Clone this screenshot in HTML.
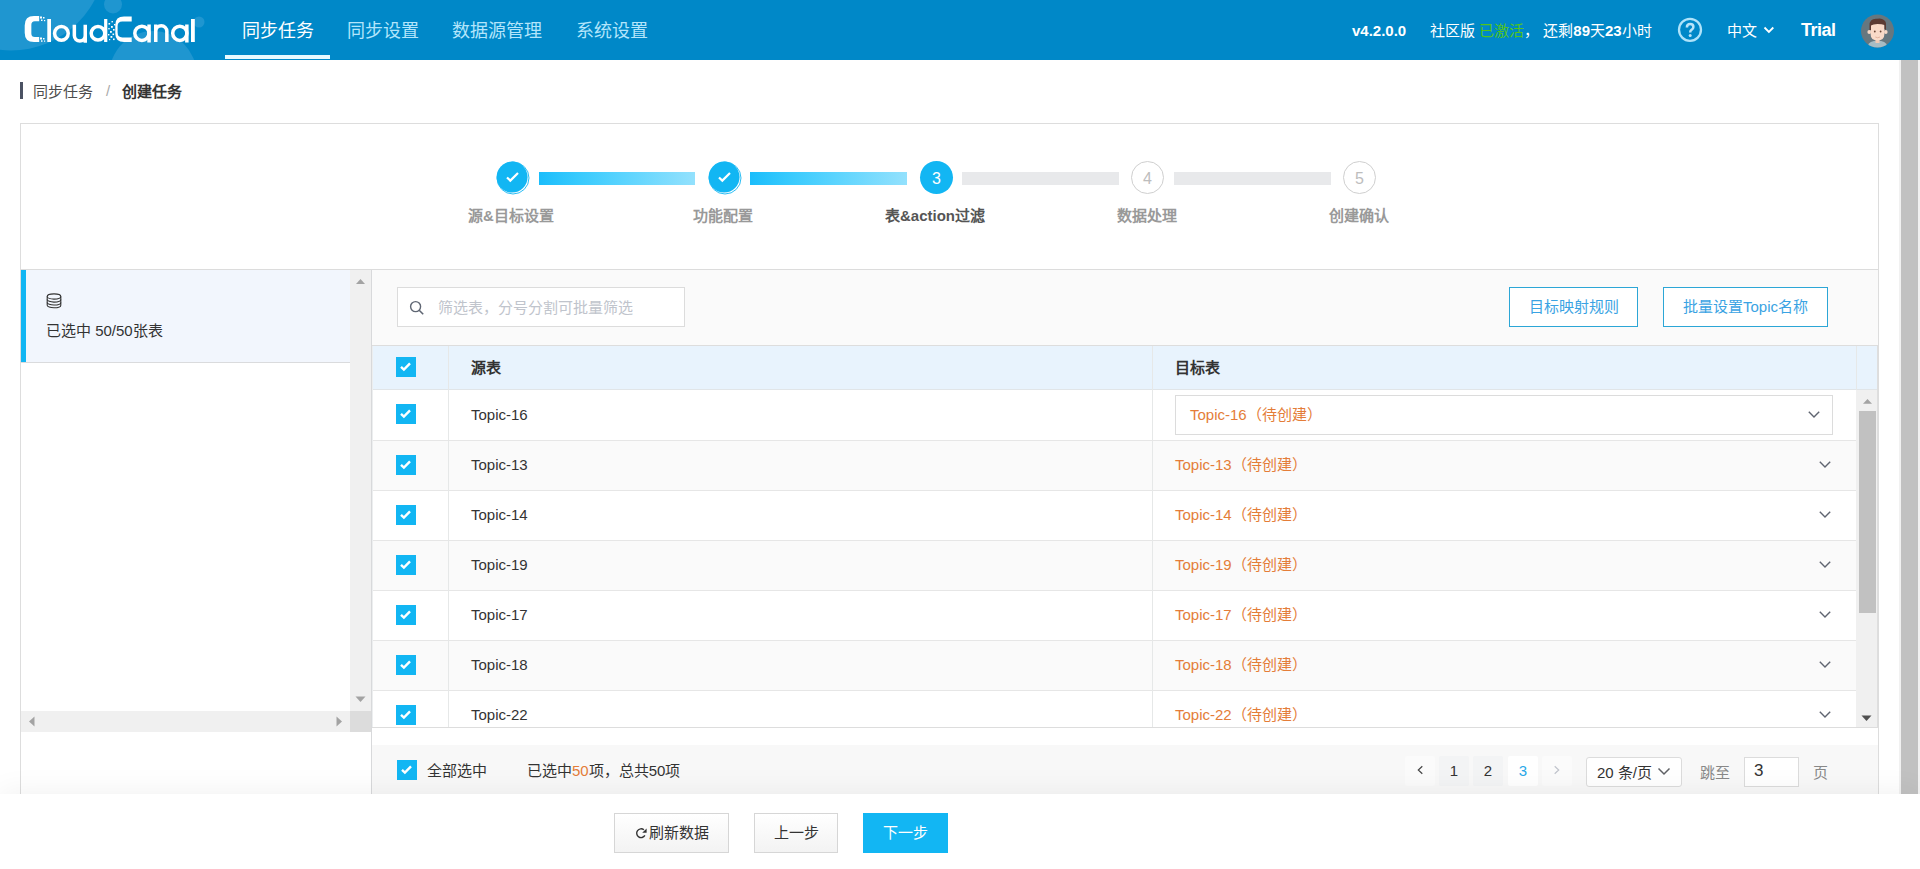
<!DOCTYPE html>
<html lang="zh-CN"><head><meta charset="utf-8">
<style>
*{box-sizing:border-box;margin:0;padding:0}
html,body{width:1920px;height:869px;overflow:hidden;background:#fff;font-family:"Liberation Sans",sans-serif;color:#333;font-size:15px}
.abs{position:absolute}
#hdr{position:absolute;left:0;top:0;width:1920px;height:60px;background:#0088c8;overflow:hidden}
.nav{position:absolute;top:1px;height:60px;line-height:60px;font-size:18px;color:#b3e5fb;white-space:nowrap}
.nav.act{color:#fff}
.uline{position:absolute;left:225px;top:55px;width:105px;height:4px;background:#e8faff}
.htxt{position:absolute;top:1px;height:60px;line-height:60px;color:#fff;font-size:15px;white-space:nowrap}
#pscroll{position:absolute;left:1899px;top:60px;width:21px;height:734px;background:#f1f1f1}
#pscroll .th{position:absolute;left:2px;top:0;width:17px;height:734px;background:#c1c1c1}
.bc-bar{position:absolute;left:20px;top:82px;width:3px;height:17px;background:#4b5263}
.card{position:absolute;left:20px;top:123px;width:1859px;height:700px;border:1px solid #ddd;background:#fff}
.step-c{position:absolute;top:161px;width:33px;height:33px;border-radius:50%;text-align:center;line-height:35px;font-size:16px}
.step-c.done{background:#12b6f3;box-shadow:inset 0 0 0 1px #12b6f3, inset 0 0 0 2px #e6f7ff}
.step-c.cur{background:#12b6f3;color:#fff}
.step-c.todo{border:1px solid #cfcfcf;color:#bdbdbd;line-height:33px}
.step-l{position:absolute;top:172px;height:13px}
.step-l.on{background:linear-gradient(90deg,#1bbdfb 0%,#38cafd 25%,#5cd4fe 55%,#93e1fd 100%)}
.step-l.off{background:#e8e9eb}
.step-t{position:absolute;top:204px;width:212px;text-align:center;font-size:15px;font-weight:bold;color:#999;white-space:nowrap}
.step-t.cur{color:#555}

.sep{position:absolute;left:21px;top:269px;width:1857px;height:1px;background:#dcdcdc}
#lp{position:absolute;left:21px;top:270px;width:350px;height:524px;background:#fff}
.litem{position:absolute;left:0;top:0;width:329px;height:93px;background:#f2f6fd;border-bottom:1px solid #dadbdd}
.litem .acc{position:absolute;left:0;top:0;width:5px;height:92px;background:#12b6f3}
.vsb{position:absolute;left:329px;top:0;width:21px;height:441px;background:#f0f0f0}
.hsb{position:absolute;left:0;top:441px;width:329px;height:21px;background:#f0f0f0}
.corner{position:absolute;left:329px;top:441px;width:21px;height:21px;background:#dcdcdc}
.vline{position:absolute;left:371px;top:270px;width:1px;height:524px;background:#d8d9db}
#rp{position:absolute;left:372px;top:270px;width:1506px;height:524px;background:#fafafa}
.inp{position:absolute;background:#fff;border:1px solid #dcdcdc}
.obtn{position:absolute;top:17px;height:40px;border:1px solid #2ca6d6;background:#fff;color:#3aa3e3;text-align:center;line-height:38px;font-size:15px;white-space:nowrap}
.tbl{position:absolute;left:0;top:75px;width:1506px;height:383px;background:#fff;border-top:1px solid #dddddd;border-bottom:1px solid #dddddd;border-right:1px solid #dedede;overflow:hidden}
.thd{position:absolute;left:0;top:0;width:1506px;height:44px;background:#e8f3fd;border-bottom:1px solid #e1e5e8}
.row{position:absolute;left:0;width:1484px;height:50px;border-bottom:1px solid #e6e6e6;background:#fff}
.row.alt{background:#fafafa}
.cb{position:absolute;left:24px;width:20px;height:20px;background:#12b6f3}
.cb svg{position:absolute;left:0;top:0}
.cdiv{position:absolute;top:0;width:1px;background:#e6e8e8}
.rtx{position:absolute;left:99px;top:0;line-height:48px;font-size:15px;color:#333;white-space:nowrap}
.otx{position:absolute;left:803px;top:0;line-height:48px;font-size:15px;color:#e47d38;white-space:nowrap}
.chev{position:absolute;left:1446px;top:14px}
.tvsb{position:absolute;left:1484px;top:44px;width:21px;height:338px;background:#f0f0f0}
.pftr{position:absolute;left:0;top:475px;width:1506px;height:49px;background:#f8f8f8}
.pg{position:absolute;top:486px;width:30px;height:30px;line-height:30px;text-align:center;font-size:15px;color:#333;background:#f3f4f5;border-radius:2px}
#ftr{position:absolute;left:0;top:794px;width:1920px;height:75px;background:#fff;box-shadow:0 -2px 30px rgba(0,0,0,0.06)}
.fbtn{position:absolute;top:19px;height:40px;border:1px solid #d6d6d6;background:linear-gradient(#fff,#f3f3f3);text-align:center;line-height:38px;font-size:15px;color:#333;white-space:nowrap}
</style></head><body>

<div id="hdr">
  <svg class="abs" style="left:0;top:0" width="260" height="60">
    <circle cx="11" cy="-44" r="94.5" fill="#1f96d0"/>
    <circle cx="113" cy="4.5" r="9" fill="#1f96d0"/>
    <circle cx="199" cy="22" r="5.5" fill="#1f96d0"/>
    <circle cx="153" cy="74.5" r="43.5" fill="#1f96d0"/>
  </svg>
  <svg class="abs" style="left:0;top:0" width="220" height="60" fill="none" stroke="#fff">
    <path d="M39.2 16.1H34Q24.7 16.1 24.7 25.5V32.7Q24.7 42.1 34 42.1H39.2V37.05H34.8Q31.35 37.05 31.35 33.5V24.7Q31.35 21.2 34.8 21.2H39.2Z" fill="#fff" stroke="none"/>
    <g fill="#fff" stroke="none">
      <rect x="40" y="16.5" width="2" height="2"/><rect x="43" y="17" width="1.5" height="1.5"/><rect x="41" y="19.5" width="1.5" height="1.5"/><rect x="44" y="20" width="1.2" height="1.2"/>
      <rect x="40" y="37.5" width="2" height="2"/><rect x="43" y="38" width="1.5" height="1.5"/><rect x="41" y="40.3" width="1.5" height="1.5"/><rect x="44" y="40.5" width="1.2" height="1.2"/>
      <rect x="47.3" y="19" width="3.7" height="23"/>
    </g>
    <circle cx="61.4" cy="33.3" r="6.85" stroke-width="3.5"/>
    <path d="M74.35 24.8V35.6A5.45 5.45 0 0 0 85.25 35.6M85.25 24.8V42.8" stroke-width="3.5"/>
    <circle cx="98" cy="33.3" r="6.8" stroke-width="3.5"/>
    <rect x="104.1" y="19" width="3.2" height="23" fill="#fff" stroke="none"/>
    <g fill="#fff" stroke="none">
      <rect x="108.5" y="23" width="1.6" height="1.6"/><rect x="111" y="26" width="1.8" height="1.8"/><rect x="108.3" y="28" width="1.4" height="1.4"/><rect x="113" y="29" width="1.6" height="1.6"/>
      <rect x="110" y="31" width="1.8" height="1.8"/><rect x="108" y="34" width="1.4" height="1.4"/><rect x="112.5" y="33.5" width="1.6" height="1.6"/><rect x="110.5" y="36" width="1.8" height="1.8"/>
      <rect x="113" y="38.5" width="1.6" height="1.6"/><rect x="109" y="39" width="1.2" height="1.2"/><rect x="111.5" y="21" width="1.4" height="1.4"/><rect x="114" y="24" width="1.4" height="1.4"/>
    </g>
    <path d="M131.7 16.6H124Q115.3 16.6 115.3 25V33.6Q115.3 42 124 42H131.7V37.4H122.3Q117.6 37.4 117.6 32.5V26Q117.6 21.4 122.3 21.4H131.7Z" fill="#fff" stroke="none"/>
    <circle cx="141.9" cy="33.3" r="7.1" stroke-width="3.5"/>
    <rect x="147.3" y="24.5" width="3.5" height="18" fill="#fff" stroke="none"/>
    <path d="M155.75 42V31.3A5.55 5.55 0 0 1 166.85 31.3V42M155.75 24.5V32" stroke-width="3.5"/>
    <circle cx="179.8" cy="33.3" r="7.1" stroke-width="3.5"/>
    <rect x="185.1" y="24.5" width="3.5" height="18" fill="#fff" stroke="none"/>
    <rect x="191" y="19" width="3.8" height="23" fill="#fff" stroke="none"/>
  </svg>
  <div class="nav act" style="left:242px">同步任务</div>
  <div class="nav" style="left:347px">同步设置</div>
  <div class="nav" style="left:452px">数据源管理</div>
  <div class="nav" style="left:576px">系统设置</div>
  <div class="uline"></div>
  <div class="htxt" style="left:1352px;font-weight:bold">v4.2.0.0</div>
  <div class="htxt" style="left:1430px">社区版 <span style="color:#52c41a">已激活</span>，&nbsp;还剩<b>89</b>天<b>23</b>小时</div>
  <div class="htxt" style="left:1727px">中文</div>
  <div class="htxt" style="left:1801px;top:0;font-size:18px;font-weight:bold;letter-spacing:-0.5px">Trial</div>
  <svg class="abs" style="left:1676px;top:16px" width="28" height="28">
    <circle cx="14" cy="13.8" r="11" fill="none" stroke="#aee3fa" stroke-width="2.3"/>
    <path d="M10.9 11.4Q10.9 8.1 14.2 8.1Q17.4 8.1 17.4 11Q17.4 12.7 15.5 13.8Q14.2 14.6 14.2 16.6" fill="none" stroke="#b9e4f9" stroke-width="2.5"/>
    <circle cx="14.2" cy="19.6" r="1.5" fill="#b9e4f9"/>
  </svg>
  <svg class="abs" style="left:1762px;top:25px" width="14" height="10"><path d="M2.5 2.5L6.9 7L11.3 2.5" fill="none" stroke="#fff" stroke-width="1.8"/></svg>
  <svg class="abs" style="left:1861px;top:14px" width="34" height="34">
    <defs><clipPath id="avc"><circle cx="16.5" cy="17" r="16.5"/></clipPath></defs>
    <circle cx="16.5" cy="17" r="16.5" fill="#66777f"/>
    <g clip-path="url(#avc)">
      <ellipse cx="16.5" cy="32" rx="9.5" ry="5.5" fill="#a7bcc4"/>
      <rect x="14.5" y="23" width="4" height="6" fill="#f2c9b4"/>
      <ellipse cx="8.2" cy="18" rx="1.8" ry="2" fill="#f7d8c6"/>
      <ellipse cx="24.8" cy="18" rx="1.8" ry="2" fill="#f7d8c6"/>
      <path d="M9.6 12Q9.6 7 16.5 7Q23.4 7 23.4 12V20Q23.4 26.5 16.5 26.5Q9.6 26.5 9.6 20Z" fill="#f9dac8"/>
      <path d="M8.5 16V11.5Q8.5 4.2 16 4.8Q19.5 4 21 5Q25.5 6.5 25 11V16L23.5 15V11Q21 10 16.5 10Q12 10 10 11.5V16Z" fill="#5b3b33"/>
      <circle cx="13.8" cy="17.5" r="0.9" fill="#6a4636"/><circle cx="19.6" cy="17.5" r="0.9" fill="#6a4636"/>
      <path d="M14.3 23Q16.7 24.5 19 23" stroke="#d9a48c" stroke-width="0.7" fill="none"/>
    </g>
  </svg>
</div>

<div id="pscroll"><div class="th"></div></div>

<div class="bc-bar"></div>
<div class="abs" style="left:33px;top:80px;font-size:15px;color:#4d4d4d;white-space:nowrap">同步任务</div>
<div class="abs" style="left:106px;top:82px;font-size:15px;color:#aaa">/</div>
<div class="abs" style="left:122px;top:80px;font-size:15px;color:#333;font-weight:bold;white-space:nowrap">创建任务</div>

<div class="card"></div>

<!-- steps -->
<div class="abs" style="left:496px;top:161px;width:34px;height:34px"><svg width="34" height="34" class="abs" style="left:0;top:0"><circle cx="17" cy="17" r="16" fill="none" stroke="#12b6f3" stroke-width="0.9"/><circle cx="16.1" cy="16.1" r="15.5" fill="#12b6f3"/><path d="M11 16.5L14.3 19.6L22 12" fill="none" stroke="#fff" stroke-width="2.2"/></svg></div>
<div class="step-l on" style="left:539px;width:156px"></div>
<div class="abs" style="left:708px;top:161px;width:34px;height:34px"><svg width="34" height="34" class="abs" style="left:0;top:0"><circle cx="17" cy="17" r="16" fill="none" stroke="#12b6f3" stroke-width="0.9"/><circle cx="16.1" cy="16.1" r="15.5" fill="#12b6f3"/><path d="M11 16.5L14.3 19.6L22 12" fill="none" stroke="#fff" stroke-width="2.2"/></svg></div>
<div class="step-l on" style="left:750px;width:157px"></div>
<div class="step-c cur" style="left:920px">3</div>
<div class="step-l off" style="left:962px;width:157px"></div>
<div class="step-c todo" style="left:1131px">4</div>
<div class="step-l off" style="left:1174px;width:157px"></div>
<div class="step-c todo" style="left:1343px">5</div>
<div class="step-t" style="left:405px">源&amp;目标设置</div>
<div class="step-t" style="left:617px">功能配置</div>
<div class="step-t cur" style="left:829px">表&amp;action过滤</div>
<div class="step-t" style="left:1041px">数据处理</div>
<div class="step-t" style="left:1253px">创建确认</div>


<div class="sep"></div>
<div id="lp">
  <div class="litem"><div class="acc"></div>
    <svg class="abs" style="left:24.5px;top:22.8px" width="17" height="17"><g fill="none" stroke="#333" stroke-width="1.1"><ellipse cx="8" cy="3.5" rx="6.8" ry="2.6"/><path d="M1.2 3.5V12.2A6.8 2.6 0 0 0 14.8 12.2V3.5"/><path d="M1.2 6.5A6.8 2.6 0 0 0 14.8 6.5M1.2 9.4A6.8 2.6 0 0 0 14.8 9.4"/></g></svg>
    <div class="abs" style="left:25px;top:49px;font-size:15px;color:#333;white-space:nowrap">已选中 50/50张表</div>
  </div>
  <div class="vsb"><svg class="abs" style="left:5px;top:8px" width="11" height="7"><path d="M1 6L5.5 1L10 6Z" fill="#a3a3a3"/></svg><svg class="abs" style="left:5px;top:426px" width="11" height="7"><path d="M0.5 0.5L5.5 6L10.5 0.5Z" fill="#a3a3a3"/></svg></div>
  <div class="hsb"><svg class="abs" style="left:7px;top:5px" width="7" height="11"><path d="M6.5 0.5L1 5.5L6.5 10.5Z" fill="#a3a3a3"/></svg><svg class="abs" style="left:315px;top:5px" width="7" height="11"><path d="M0.5 0.5L6 5.5L0.5 10.5Z" fill="#a3a3a3"/></svg></div>
  <div class="corner"></div>
</div>
<div class="vline"></div>
<div id="rp">
  <div class="inp" style="left:25px;top:17px;width:288px;height:40px"></div>
  <svg class="abs" style="left:37px;top:30px" width="16" height="16"><circle cx="6.6" cy="6.6" r="5" fill="none" stroke="#5f6673" stroke-width="1.4"/><path d="M10.2 10.2L14.2 14.2" stroke="#5f6673" stroke-width="1.6"/></svg>
  <div class="abs" style="left:66px;top:26px;font-size:15px;color:#c0c4cc;white-space:nowrap">筛选表，分号分割可批量筛选</div>
  <div class="obtn" style="left:1137px;width:129px">目标映射规则</div>
  <div class="obtn" style="left:1291px;width:165px">批量设置Topic名称</div>
  <div class="tbl">
    <div class="abs" style="left:0;top:0;width:1px;height:383px;background:#eceeef;z-index:5"></div>
    <div class="thd"><div class="cb" style="top:11px"><svg width="20" height="20"><path d="M5 9.8L7.9 12.6L14 6.3" fill="none" stroke="#fff" stroke-width="2.4"/></svg></div><div class="cdiv" style="left:76px;height:44px"></div><div class="abs" style="left:99px;top:0;line-height:44px;font-weight:bold;font-size:15px">源表</div><div class="cdiv" style="left:780px;height:44px"></div><div class="abs" style="left:803px;top:0;line-height:44px;font-weight:bold;font-size:15px">目标表</div><div class="cdiv" style="left:1484px;height:44px"></div></div>
    <div class="row" style="top:44px;height:51px"><div class="cb" style="top:14px"><svg width="20" height="20"><path d="M5 9.8L7.9 12.6L14 6.3" fill="none" stroke="#fff" stroke-width="2.4"/></svg></div><div class="cdiv" style="left:76px;height:50px"></div><div class="rtx" style="line-height:50px">Topic-16</div><div class="cdiv" style="left:780px;height:50px"></div><div class="inp" style="left:803px;top:5px;width:658px;height:40px"></div><div class="otx" style="left:818px;line-height:50px">Topic-16（待创建）</div><div class="chev" style="left:1435px;top:14.5px"><svg width="14" height="9"><path d="M1.8 1.8L7 7L12.2 1.8" fill="none" stroke="#5f6470" stroke-width="1.4"/></svg></div></div>
<div class="row alt" style="top:95px"><div class="cb" style="top:14px"><svg width="20" height="20"><path d="M5 9.8L7.9 12.6L14 6.3" fill="none" stroke="#fff" stroke-width="2.4"/></svg></div><div class="cdiv" style="left:76px;height:50px"></div><div class="rtx">Topic-13</div><div class="cdiv" style="left:780px;height:50px"></div><div class="otx">Topic-13（待创建）</div><div class="chev"><svg width="14" height="9"><path d="M1.8 1.8L7 7L12.2 1.8" fill="none" stroke="#5f6470" stroke-width="1.4"/></svg></div></div>
<div class="row" style="top:145px"><div class="cb" style="top:14px"><svg width="20" height="20"><path d="M5 9.8L7.9 12.6L14 6.3" fill="none" stroke="#fff" stroke-width="2.4"/></svg></div><div class="cdiv" style="left:76px;height:50px"></div><div class="rtx">Topic-14</div><div class="cdiv" style="left:780px;height:50px"></div><div class="otx">Topic-14（待创建）</div><div class="chev"><svg width="14" height="9"><path d="M1.8 1.8L7 7L12.2 1.8" fill="none" stroke="#5f6470" stroke-width="1.4"/></svg></div></div>
<div class="row alt" style="top:195px"><div class="cb" style="top:14px"><svg width="20" height="20"><path d="M5 9.8L7.9 12.6L14 6.3" fill="none" stroke="#fff" stroke-width="2.4"/></svg></div><div class="cdiv" style="left:76px;height:50px"></div><div class="rtx">Topic-19</div><div class="cdiv" style="left:780px;height:50px"></div><div class="otx">Topic-19（待创建）</div><div class="chev"><svg width="14" height="9"><path d="M1.8 1.8L7 7L12.2 1.8" fill="none" stroke="#5f6470" stroke-width="1.4"/></svg></div></div>
<div class="row" style="top:245px"><div class="cb" style="top:14px"><svg width="20" height="20"><path d="M5 9.8L7.9 12.6L14 6.3" fill="none" stroke="#fff" stroke-width="2.4"/></svg></div><div class="cdiv" style="left:76px;height:50px"></div><div class="rtx">Topic-17</div><div class="cdiv" style="left:780px;height:50px"></div><div class="otx">Topic-17（待创建）</div><div class="chev"><svg width="14" height="9"><path d="M1.8 1.8L7 7L12.2 1.8" fill="none" stroke="#5f6470" stroke-width="1.4"/></svg></div></div>
<div class="row alt" style="top:295px"><div class="cb" style="top:14px"><svg width="20" height="20"><path d="M5 9.8L7.9 12.6L14 6.3" fill="none" stroke="#fff" stroke-width="2.4"/></svg></div><div class="cdiv" style="left:76px;height:50px"></div><div class="rtx">Topic-18</div><div class="cdiv" style="left:780px;height:50px"></div><div class="otx">Topic-18（待创建）</div><div class="chev"><svg width="14" height="9"><path d="M1.8 1.8L7 7L12.2 1.8" fill="none" stroke="#5f6470" stroke-width="1.4"/></svg></div></div>
<div class="row" style="top:345px"><div class="cb" style="top:14px"><svg width="20" height="20"><path d="M5 9.8L7.9 12.6L14 6.3" fill="none" stroke="#fff" stroke-width="2.4"/></svg></div><div class="cdiv" style="left:76px;height:50px"></div><div class="rtx">Topic-22</div><div class="cdiv" style="left:780px;height:50px"></div><div class="otx">Topic-22（待创建）</div><div class="chev"><svg width="14" height="9"><path d="M1.8 1.8L7 7L12.2 1.8" fill="none" stroke="#5f6470" stroke-width="1.4"/></svg></div></div>

    <div class="tvsb"><svg class="abs" style="left:6px;top:8px" width="11" height="7"><path d="M1 5.8L5.5 1L10 5.8Z" fill="#a3a3a3"/></svg><div class="abs" style="left:3px;top:21px;width:17px;height:202px;background:#c1c1c1"></div><svg class="abs" style="left:5px;top:325px" width="11" height="7"><path d="M0.5 0.5L5.5 6L10.5 0.5Z" fill="#505050"/></svg></div>
  </div>
  <div class="abs" style="left:0;top:458px;width:1506px;height:17px;background:#fff"></div>
  <div class="pftr"></div>
  <div class="cb" style="left:25px;top:490px"><svg width="20" height="20"><path d="M5 9.8L7.9 12.6L14 6.3" fill="none" stroke="#fff" stroke-width="2.4"/></svg></div>
  <div class="abs" style="left:55px;top:489px;font-size:15px;color:#333;white-space:nowrap">全部选中</div>
  <div class="abs" style="left:155px;top:489px;font-size:15px;color:#333;white-space:nowrap">已选中<span style="color:#e47d38">50</span>项，总共50项</div>
  <div class="pg" style="left:1033px;background:#fbfbfb"><svg width="30" height="30"><path d="M17.3 10.2L13.3 14L17.3 17.8" fill="none" stroke="#444" stroke-width="1.2"/></svg></div>
  <div class="pg" style="left:1067px">1</div>
  <div class="pg" style="left:1101px">2</div>
  <div class="pg" style="left:1136px;background:#fff;color:#2aa8e8">3</div>
  <div class="pg" style="left:1170px;background:#fbfbfb"><svg width="30" height="30"><path d="M12.7 10.2L16.7 14L12.7 17.8" fill="none" stroke="#c0c4cc" stroke-width="1.2"/></svg></div>
  <div class="inp" style="left:1214px;top:487px;width:96px;height:30px;border-radius:3px"></div>
  <div class="abs" style="left:1225px;top:491px;font-size:15px;color:#333;white-space:nowrap">20 条/页</div>
  <svg class="abs" style="left:1285px;top:497px" width="14" height="9"><path d="M1.5 1.5L7 7L12.5 1.5" fill="none" stroke="#606266" stroke-width="1.5"/></svg>
  <div class="abs" style="left:1328px;top:491px;font-size:15px;color:#888;white-space:nowrap">跳至</div>
  <div class="inp" style="left:1372px;top:487px;width:55px;height:30px"></div>
  <div class="abs" style="left:1382px;top:491px;font-size:17px;color:#333">3</div>
  <div class="abs" style="left:1441px;top:491px;font-size:15px;color:#888">页</div>
</div>

<div id="ftr">
  <div class="fbtn" style="left:614px;width:115px;padding-left:15px"><svg width="40" height="40" class="abs" style="left:-1px;top:-1px"><path d="M30.9 22.4A4.4 4.4 0 1 1 29.9 16.8" fill="none" stroke="#333" stroke-width="1.4"/><path d="M28.2 19.7L32.6 15.4L32.6 19.7Z" fill="#333"/></svg>刷新数据</div>
  <div class="fbtn" style="left:754px;width:84px">上一步</div>
  <div class="fbtn" style="left:863px;width:85px;background:#12b6f3;border-color:#12b6f3;color:#fff">下一步</div>
</div>
</body></html>
